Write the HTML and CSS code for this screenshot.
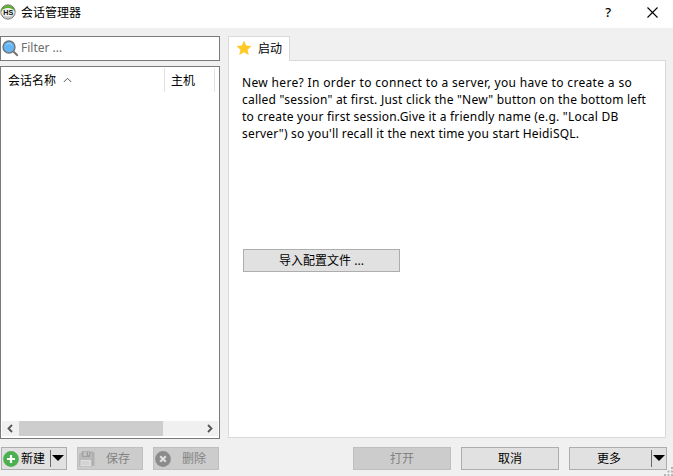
FILE: index.html
```html
<!DOCTYPE html>
<html lang="zh-CN">
<head>
<meta charset="utf-8">
<title>会话管理器</title>
<link rel="stylesheet" href="styles.css">
</head>
<body>
<header class="titlebar">
  <svg class="logo" width="16" height="16" viewBox="0 0 16 16">
    <defs><linearGradient id="ring" x1="0" y1="0" x2="0" y2="1"><stop offset="0" stop-color="#6abf35"/><stop offset=".4" stop-color="#4b9d2a"/><stop offset=".55" stop-color="#d8d8d8"/><stop offset="1" stop-color="#bdbdbd"/></linearGradient></defs>
    <circle cx="8" cy="8" r="7.2" fill="url(#ring)" stroke="#777" stroke-width=".9"/>
    <ellipse cx="8" cy="8.2" rx="6.5" ry="4.2" fill="#f0f2ee"/>
    <text x="3.2" y="11" class="logo-text" textLength="10" lengthAdjust="spacingAndGlyphs">HS</text>
  </svg>
  <h1>会话管理器</h1>
  <span class="help">?</span>
  <svg class="close" width="11" height="11" viewBox="0 0 11 11"><path d="M.5.5l10 10M10.5.5l-10 10" stroke="#000" stroke-width="1.1"/></svg>
</header>
<main class="content">
  <section class="sidebar">
    <div class="filter">
      <svg width="17" height="17" viewBox="0 0 17 17"><path d="M11 11l4.7 4.7" stroke="#747474" stroke-width="2"/><circle cx="7" cy="7" r="6" fill="#64b5f6" stroke="#707478" stroke-width="1.4"/><path d="M3.8 5.2Q7 1.8 10.2 5.2" fill="none" stroke="#a5d5fa"/></svg>
      <span>Filter ...</span>
    </div>
    <div class="list">
      <div class="columns">
        <div class="col name">会话名称<svg width="9" height="6" viewBox="0 0 9 6"><path d="M.8 5l3.7-3.7L8.2 5" fill="none" stroke="#555"/></svg></div>
        <div class="col host">主机</div>
      </div>
      <div class="scroll">
        <svg width="17" height="15" viewBox="0 0 17 15"><path d="M10 4L6.5 7.5 10 11" fill="none" stroke="#555" stroke-width="1.8"/></svg>
        <div class="thumb"></div>
        <svg class="right" width="17" height="15" viewBox="0 0 17 15"><path d="M7 4l3.5 3.5L7 11" fill="none" stroke="#555" stroke-width="1.8"/></svg>
      </div>
    </div>
  </section>
  <section class="pages">
    <div class="tab">
      <svg width="16" height="16" viewBox="0 0 16 16"><path d="M8 .6l2.2 4.9 5.3.6-3.9 3.6 1.1 5.3L8 12.3 3.3 15l1.1-5.3L.5 6.1l5.3-.6z" fill="#ffca28"/></svg>
      <span>启动</span>
    </div>
    <div class="panel">
      <p class="intro">
        <span class="l1">New here? In order to connect to a server, you have to create a so</span>
        <span class="l2">called "session" at first. Just click the "New" button on the bottom left</span>
        <span class="l3">to create your first session.Give it a friendly name (e.g. "Local DB</span>
        <span class="l4">server") so you'll recall it the next time you start HeidiSQL.</span>
      </p>
      <button class="btn import">导入配置文件 ...</button>
    </div>
  </section>
</main>
<footer class="actions">
  <button class="btn small new">
    <svg width="16" height="16" viewBox="0 0 16 16"><circle cx="8" cy="8" r="7.9" fill="#4caf50"/><path d="M8 4v8M4 8h8" stroke="#fff" stroke-width="2.2"/></svg>
    <span>新建</span>
    <i class="split"></i>
    <svg class="arrow" width="12" height="6" viewBox="0 0 12 6"><path d="M0 0h12L6 6z"/></svg>
  </button>
  <button class="btn small disabled" disabled>
    <svg width="16" height="16" viewBox="0 0 16 16"><path d="M1 3L3 .5h11.5L15.5 2v13H1z" fill="#b0b0b0"/><path d="M0 3h13v12.5H0z" fill="#b9b9b9"/><path d="M3 .5h8V6H3z" fill="#a0a0a0"/><path d="M4.5 1h3v4h-3zM9 1h1v3H9z" fill="#c5c5c5"/><path d="M1.5 9H12v6H1.5z" fill="#dedede"/><path d="M2.5 11h8M2.5 13h8" stroke="#c8c8c8"/></svg>
    <span>保存</span>
  </button>
  <button class="btn small disabled" disabled>
    <svg width="16" height="16" viewBox="0 0 16 16"><circle cx="8" cy="8" r="7.9" fill="#8b8b8b"/><path d="M5.2 5.2l5.6 5.6M10.8 5.2l-5.6 5.6" stroke="#dedede" stroke-width="2.2"/></svg>
    <span>删除</span>
  </button>
  <button class="btn wide open disabled" disabled>打开</button>
  <button class="btn wide">取消</button>
  <button class="btn wide more">
    <span>更多</span>
    <i class="split"></i>
    <svg class="arrow" width="12" height="6" viewBox="0 0 12 6"><path d="M0 0h12L6 6z"/></svg>
  </button>
</footer>
<svg class="grip" width="9" height="9" viewBox="0 0 9 9"><path d="M7 0h2v2H7zM3.5 3.5h2v2h-2zM7 3.5h2v2H7zM0 7h2v2H0zM3.5 7h2v2h-2zM7 7h2v2H7z" fill="#b5b5b5"/></svg>
</body>
</html>
```
FILE: styles.css
```css
* { box-sizing: border-box; }
body {
  margin: 0;
  width: 673px;
  height: 476px;
  overflow: hidden;
  background: #f0f0f0;
  color: #000;
  font: 12px/17px "Noto Sans", "Noto Sans CJK SC", sans-serif;
  display: flex;
  flex-direction: column;
}
svg { display: block; flex: none; }
.titlebar {
  height: 28px;
  flex: none;
  background: #fff;
  display: flex;
  align-items: center;
  padding: 0 15px 4px 0;
}
.logo-text { font: bold 8px "Liberation Sans", sans-serif; fill: #111; }
.titlebar h1 { margin: 0 auto 0 5px; font-size: 12px; font-weight: 400; }
.help { font-size: 13px; font-weight: 500; margin-right: 36px; }
.content { display: flex; gap: 8px; height: 411px; padding-top: 8px; flex: none; }
.sidebar { width: 220px; display: flex; flex-direction: column; gap: 5px; }
.filter {
  height: 25px;
  background: #fff;
  border: 1px solid #7a7a7a;
  display: flex;
  align-items: center;
  gap: 2px;
  padding-left: 1px;
  color: #6d6d6d;
}
.filter span { padding-bottom: 2px; }
.list {
  flex: 1;
  background: #fff;
  border: 1px solid #7a7a7a;
  display: flex;
  flex-direction: column;
  justify-content: space-between;
  padding: 1px;
}
.columns { display: flex; height: 24px; }
.col { border-right: 1px solid #e2e2e2; display: flex; align-items: center; padding-left: 6px; }
.name { width: 163px; gap: 7px; }
.host { width: 50px; }
.scroll { height: 15px; margin-bottom: 1px; background: #f0f0f0; display: flex; }
.thumb { width: 144px; background: #cdcdcd; }
.right { margin-left: auto; }
.pages { width: 438px; display: flex; flex-direction: column; }
.tab {
  width: 62px;
  height: 25px;
  background: #fff;
  border: 1px solid #d9d9d9;
  border-bottom: 0;
  display: flex;
  align-items: center;
  gap: 6px;
  padding: 0 0 2px 7px;
  position: relative;
  z-index: 1;
}
.panel {
  height: 378px;
  margin-top: -1px;
  background: #fff;
  border: 1px solid #d9d9d9;
  padding: 13px 13px;
}
.intro { margin: 0 0 107px; white-space: nowrap; }
.intro span { display: block; width: max-content; }
.l1 { letter-spacing: .34px; }
.l2 { letter-spacing: .22px; }
.l3 { letter-spacing: .21px; }
.l4 { letter-spacing: .18px; }
.btn {
  height: 23px;
  margin: 0;
  padding: 0;
  border: 1px solid #adadad;
  border-radius: 0;
  background: #e1e1e1;
  color: #000;
  font: inherit;
}
.import { width: 157px; margin-left: 1px; display: block; }
.actions { display: flex; gap: 10px; padding: 8px 0 0 1px; }
.small { width: 66px; display: flex; align-items: center; padding-left: 1px; }
.small.disabled { padding-left: 2px; }
.small.disabled svg { margin-left: -1px; }
.small.disabled span { flex: 1; padding-right: 1px; }
.new span { margin-left: 2px; }
.split { width: 1px; height: 17px; background: #696969; }
.new .split { margin: 0 1px 0 5px; }
.arrow { margin-bottom: 2px; }
.wide { width: 98px; }
.open { margin-left: 124px; }
.more { display: flex; align-items: center; }
.more span { width: 78px; }
.more .split { margin: 0 1px 0 3px; }
.disabled { background: #ccc; border-color: #bfbfbf; color: #838383; }
.grip { position: absolute; right: 0; bottom: 0; }
```
